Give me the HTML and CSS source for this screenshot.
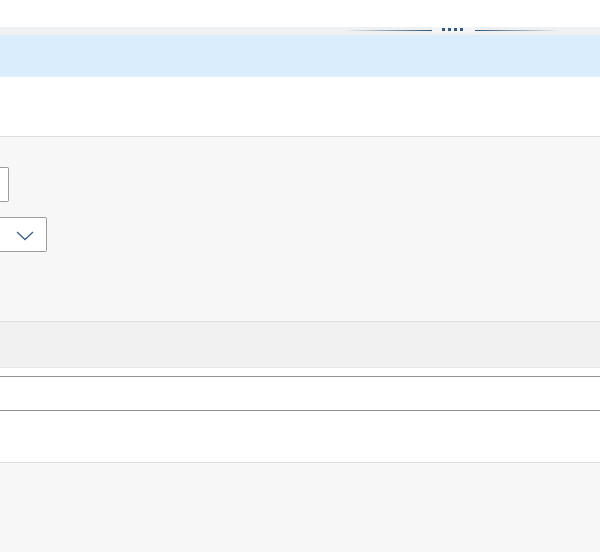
FILE: index.html
```html
<!DOCTYPE html>
<html lang="en">
<head>
  <meta charset="UTF-8">
  <title>Form</title>
  <link rel="stylesheet" href="styles.css">
</head>
<body>

  <div class="top-bar"></div>

  <div class="splitter">
    <div class="grip-line grip-left"></div>
    <div class="grip-dots">
      <span></span><span></span><span></span><span></span>
    </div>
    <div class="grip-line grip-right"></div>
  </div>

  <div class="notice"></div>

  <div class="title-row"></div>

  <div class="filter-panel">
    <div class="text-box"></div>
    <div class="select-box">
      <svg width="18" height="10" viewBox="0 0 18 10">
        <path d="M1 1l8 7.5 8-7.5" fill="none" stroke="#3a6186" stroke-width="1.3"/>
      </svg>
    </div>
  </div>

  <div class="section-head"></div>

  <div class="input-row">
    <div class="wide-input"></div>
  </div>

  <div class="footer-panel"></div>

</body>
</html>
```

FILE: styles.css
```css
html, body {
  height: 100%;
}

body {
  margin: 0;
  background: #f7f7f7;
  font-family: "Liberation Sans", sans-serif;
  overflow: hidden;
}

.top-bar {
  height: 27px;
  background: #fff;
}

.splitter {
  height: 8px;
  background: #eff0f1;
  display: flex;
  align-items: flex-start;
  padding-left: 345px;
}

.grip-line {
  height: 1px;
  margin-top: 3px;
}

.grip-left {
  width: 87px;
  background: linear-gradient(to right, #eff0f1, #2f5678);
}

.grip-right {
  width: 85px;
  background: linear-gradient(to right, #2f5678, #eff0f1);
}

.grip-dots {
  width: 43px;
  height: 6px;
  background: #f3f5f7;
  display: flex;
  justify-content: center;
  gap: 3px;
  padding-top: 1px;
  padding-right: 2px;
  box-sizing: border-box;
}

.grip-dots span {
  width: 3px;
  height: 3px;
  background: #34597c;
}

.notice {
  height: 41px;
  background: #d9edfd;
  border-bottom: 1px solid #e5f2fd;
}

.title-row {
  height: 59px;
  background: #fff;
  border-bottom: 1px solid #dedede;
}

.filter-panel {
  height: 154px;
  background: #f7f7f7;
  border-bottom: 1px solid #dedede;
  padding-top: 30px;
}

.text-box {
  width: 8px;
  height: 33px;
  background: #fff;
  border: 1px solid #9c9c9c;
  border-left: none;
  border-radius: 0 2px 2px 0;
}

.select-box {
  width: 46px;
  height: 33px;
  margin-top: 15px;
  background: #fff;
  border: 1px solid #9c9c9c;
  border-left: none;
  border-radius: 0 2px 2px 0;
  display: flex;
  align-items: center;
  justify-content: flex-end;
}

.select-box svg {
  margin-right: 12px;
  margin-top: 2px;
}

.section-head {
  height: 45px;
  background: #f1f1f1;
  border-bottom: 1px solid #e8e8e8;
}

.input-row {
  height: 86px;
  background: #fff;
  padding-top: 8px;
  border-bottom: 1px solid #dedede;
}

.wide-input {
  height: 33px;
  background: #fff;
  border-top: 1px solid #929292;
  border-bottom: 1px solid #929292;
}

.footer-panel {
  height: 89px;
  background: #f7f7f7;
}
```
